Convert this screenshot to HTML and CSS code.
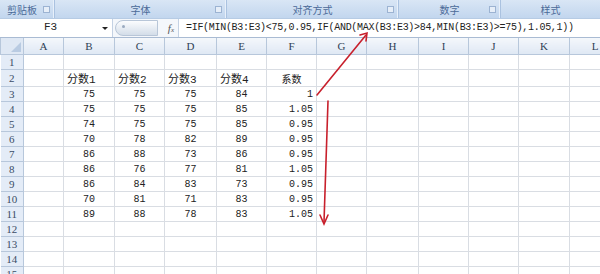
FILE: index.html
```html
<!DOCTYPE html>
<html lang="zh-CN">
<head>
    <meta charset="UTF-8">
    <title>系数公式</title>
    <link rel="stylesheet" href="styles.css">
</head>
<body>
<div class="page">
    <!-- Ribbon group labels -->
    <div class="ribbon">
        <div class="group g-clip"><span class="label">剪贴板</span><span class="launcher"></span></div>
        <div class="group g-font"><span class="label">字体</span><span class="launcher"></span></div>
        <div class="group g-align"><span class="label">对齐方式</span><span class="launcher"></span></div>
        <div class="group g-num"><span class="label">数字</span><span class="launcher"></span></div>
        <div class="group g-style"><span class="label">样式</span></div>
    </div>

    <!-- Formula bar -->
    <div class="formula-bar">
        <div class="name-box">
            <span class="name">F3</span>
            <span class="drop"></span>
        </div>
        <div class="fx-area">
            <span class="handle"><span class="dot"></span></span>
            <span class="fx"><i>f</i><small>x</small></span>
        </div>
        <div class="formula">=IF(MIN(B3:E3)&lt;75,0.95,IF(AND(MAX(B3:E3)&gt;84,MIN(B3:E3)&gt;=75),1.05,1))</div>
    </div>

    <!-- Sheet -->
    <table class="sheet">
        <colgroup>
            <col class="c-rh"><col class="c-a"><col class="c-b"><col class="c-c"><col class="c-d"><col class="c-e">
            <col class="c-f"><col class="c-g"><col class="c-h"><col class="c-i"><col class="c-j"><col class="c-k"><col class="c-l">
        </colgroup>
        <thead>
            <tr>
                <th class="corner"><span class="tri"></span></th>
                <th>A</th><th>B</th><th>C</th><th>D</th><th>E</th><th>F</th>
                <th>G</th><th>H</th><th>I</th><th>J</th><th>K</th><th>L</th>
            </tr>
        </thead>
        <tbody>
            <tr><th>1</th><td></td><td></td><td></td><td></td><td></td><td></td><td></td><td></td><td></td><td></td><td></td><td></td></tr>
            <tr><th>2</th><td></td><td class="txt">分数1</td><td class="txt">分数2</td><td class="txt">分数3</td><td class="txt">分数4</td><td class="mid">系数</td><td></td><td></td><td></td><td></td><td></td><td></td></tr>
            <tr><th>3</th><td></td><td class="mid">75</td><td class="mid">75</td><td class="mid">75</td><td class="mid">84</td><td class="num">1</td><td></td><td></td><td></td><td></td><td></td><td></td></tr>
            <tr><th>4</th><td></td><td class="mid">75</td><td class="mid">75</td><td class="mid">75</td><td class="mid">85</td><td class="num">1.05</td><td></td><td></td><td></td><td></td><td></td><td></td></tr>
            <tr><th>5</th><td></td><td class="mid">74</td><td class="mid">75</td><td class="mid">75</td><td class="mid">85</td><td class="num">0.95</td><td></td><td></td><td></td><td></td><td></td><td></td></tr>
            <tr><th>6</th><td></td><td class="mid">70</td><td class="mid">78</td><td class="mid">82</td><td class="mid">89</td><td class="num">0.95</td><td></td><td></td><td></td><td></td><td></td><td></td></tr>
            <tr><th>7</th><td></td><td class="mid">86</td><td class="mid">88</td><td class="mid">73</td><td class="mid">86</td><td class="num">0.95</td><td></td><td></td><td></td><td></td><td></td><td></td></tr>
            <tr><th>8</th><td></td><td class="mid">86</td><td class="mid">76</td><td class="mid">77</td><td class="mid">81</td><td class="num">1.05</td><td></td><td></td><td></td><td></td><td></td><td></td></tr>
            <tr><th>9</th><td></td><td class="mid">86</td><td class="mid">84</td><td class="mid">83</td><td class="mid">73</td><td class="num">0.95</td><td></td><td></td><td></td><td></td><td></td><td></td></tr>
            <tr><th>10</th><td></td><td class="mid">70</td><td class="mid">81</td><td class="mid">71</td><td class="mid">83</td><td class="num">0.95</td><td></td><td></td><td></td><td></td><td></td><td></td></tr>
            <tr><th>11</th><td></td><td class="mid">89</td><td class="mid">88</td><td class="mid">78</td><td class="mid">83</td><td class="num">1.05</td><td></td><td></td><td></td><td></td><td></td><td></td></tr>
            <tr><th>12</th><td></td><td></td><td></td><td></td><td></td><td></td><td></td><td></td><td></td><td></td><td></td><td></td></tr>
            <tr><th>13</th><td></td><td></td><td></td><td></td><td></td><td></td><td></td><td></td><td></td><td></td><td></td><td></td></tr>
            <tr><th>14</th><td></td><td></td><td></td><td></td><td></td><td></td><td></td><td></td><td></td><td></td><td></td><td></td></tr>
            <tr><th>15</th><td></td><td></td><td></td><td></td><td></td><td></td><td></td><td></td><td></td><td></td><td></td><td></td></tr>
        </tbody>
    </table>

    <!-- Red annotation arrows -->
    <svg class="arrows" width="600" height="274" viewBox="0 0 600 274">
        <g stroke="#c8202c" stroke-width="1.6" fill="none" stroke-linecap="round">
            <line x1="317" y1="95" x2="366" y2="35"/>
            <path d="M360 35 L367 33 L366 41"/>
            <line x1="328" y1="101" x2="324" y2="222"/>
            <path d="M320 215 L324 224 L328 215"/>
        </g>
    </svg>
</div>
</body>
</html>
```

FILE: styles.css
```css
body {
    margin: 0;
    background: #ffffff;
    overflow: hidden;
}
.page {
    position: relative;
    width: 600px;
    height: 274px;
    overflow: hidden;
    font-family: "Liberation Mono", "Noto Sans CJK SC", monospace;
}

/* ribbon */
.ribbon {
    display: flex;
    height: 18px;
    background: linear-gradient(#d9e6f5, #c2d6ee);
    border-bottom: 1px solid #b6cbe4;
}
.group {
    position: relative;
    display: flex;
    align-items: center;
    justify-content: center;
    border-right: 1px solid #aac2e0;
    box-shadow: inset -1px 0 0 #e8f0fa;
    box-sizing: border-box;
}
.g-clip { width: 55px; justify-content: flex-start; padding-left: 7px; }
.g-font { width: 172px; }
.g-align { width: 172px; }
.g-num { width: 102px; }
.g-style { flex: 1; border-right: none; box-shadow: none; }
.label {
    font-family: "Noto Sans CJK SC", sans-serif;
    font-size: 10px;
    color: #4a6a98;
}
.launcher {
    position: absolute;
    right: 4px;
    top: 6px;
    width: 5px;
    height: 5px;
    border: 1px solid #9cb3d2;
    background: #e6eef8;
}

/* formula bar */
.formula-bar {
    display: flex;
    height: 18px;
    background: #eef3fa;
    border-bottom: 1px solid #a9bbd3;
}
.name-box {
    width: 113px;
    position: relative;
    background: #ffffff;
    border-right: 1px solid #c4d2e4;
    box-sizing: border-box;
}
.name {
    position: absolute;
    left: 44px;
    top: 2px;
    font-size: 11px;
    color: #222;
}
.drop {
    position: absolute;
    right: 4px;
    top: 8px;
    border-left: 3px solid transparent;
    border-right: 3px solid transparent;
    border-top: 3px solid #222;
}
.fx-area {
    width: 65px;
    display: flex;
    align-items: center;
    padding: 2px 4px 2px 2px;
    box-sizing: border-box;
    background: #f4f7fb;
}
.handle {
    flex: 1;
    height: 14px;
    border-radius: 8px 0 0 8px;
    background: linear-gradient(#fbfcfe, #d3dde9);
    border: 1px solid #b8c6d8;
    position: relative;
}
.dot {
    position: absolute;
    left: 6px;
    top: 4px;
    width: 3px;
    height: 3px;
    border-radius: 50%;
    background: #9aaac0;
}
.fx {
    width: 16px;
    text-align: right;
    font-family: "Liberation Serif", serif;
    color: #555;
    font-size: 11px;
}
.fx small {
    font-size: 7px;
    font-style: italic;
}
.formula {
    flex: 1;
    background: #ffffff;
    border-left: 1px solid #c4d2e4;
    padding-left: 7px;
    font-size: 10px;
    letter-spacing: -0.3px;
    line-height: 18px;
    color: #222;
    white-space: nowrap;
}

/* sheet */
.sheet {
    border-collapse: collapse;
    table-layout: fixed;
    width: 620px;
}
.c-rh { width: 23px; }
.c-a { width: 40px; }
.c-b { width: 51px; }
.c-c { width: 50px; }
.c-d { width: 52px; }
.c-e { width: 50px; }
.c-f { width: 50px; }
.c-g { width: 50px; }
.c-h { width: 52px; }
.c-i { width: 50px; }
.c-j { width: 50px; }
.c-k { width: 51px; }
.c-l { width: 51px; }

.sheet thead th {
    height: 16px;
    padding: 0;
    font-family: "Liberation Serif", serif;
    font-weight: normal;
    font-size: 11px;
    color: #2f3f55;
    background: linear-gradient(#f4f7fb, #dfe8f4);
    border: 1px solid #b7c7db;
    border-top: none;
}
.sheet tbody th {
    height: 14px;
    padding: 0;
    font-family: "Liberation Serif", serif;
    font-weight: normal;
    font-size: 11px;
    color: #3a4c66;
    background: #e4ecf7;
    border: 1px solid #b7c7db;
    border-left: none;
}
.sheet .corner {
    position: relative;
    background: #dfe8f4;
}
.tri {
    position: absolute;
    right: 2px;
    bottom: 2px;
    border-left: 10px solid transparent;
    border-bottom: 10px solid #b9cbe2;
}
.sheet td {
    height: 14px;
    padding: 0 3px;
    border: 1px solid #d9dde3;
    font-size: 10px;
    color: #222;
    white-space: nowrap;
    overflow: hidden;
}
.sheet td.txt {
    text-align: left;
    font-size: 11px;
}
.sheet td.mid {
    text-align: center;
}
.sheet td.num {
    text-align: right;
}

/* annotation overlay */
.arrows {
    position: absolute;
    left: 0;
    top: 0;
    pointer-events: none;
}
```
